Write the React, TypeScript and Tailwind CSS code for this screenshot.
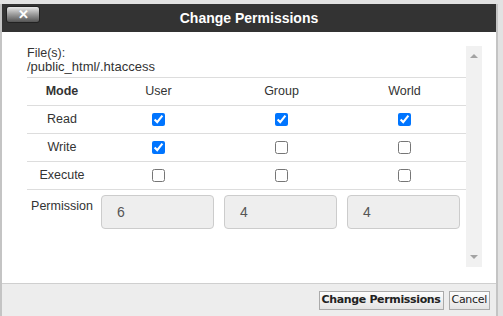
import React from 'react';

const cols = ['User', 'Group', 'World'];
const rows: { label: string; checks: boolean[] }[] = [
  { label: 'Read', checks: [true, true, true] },
  { label: 'Write', checks: [true, false, false] },
  { label: 'Execute', checks: [false, false, false] },
];
const perms = ['6', '4', '4'];

function Check({ on }: { on: boolean }) {
  return (
    <input
      type="checkbox"
      defaultChecked={on}
      className="m-0 h-[13px] w-[13px] accent-[#0075ff]"
    />
  );
}

export default function App() {
  return (
    <div className="w-[503px] h-[316px] overflow-hidden bg-[#e2e2e2] pt-[4px] font-['Liberation_Sans',Arial,sans-serif]">
      <div className="w-[498px] h-[312px] flex flex-col border-l-2 border-r-2 border-[#c4c4c4] bg-white">
        {/* title bar */}
        <div className="relative h-[28px] bg-[#333333] flex items-center justify-center">
          <button className="absolute left-[4px] top-[2px] w-[34px] h-[17px] rounded-[3px] border border-[#222] bg-gradient-to-b from-[#e8e8e8] via-[#9a9a9a] to-[#555] flex items-center justify-center">
            <span className="text-white text-[13px] font-bold leading-none">✕</span>
          </button>
          <span className="text-white text-[14px] font-bold">Change Permissions</span>
        </div>

        {/* body */}
        <div className="flex-1 flex pt-[14px] pl-[25px]">
          <div className="w-[439px] text-[#333] text-[12.5px]">
            <div className="leading-[14px]">File(s):</div>
            <div className="leading-[14px] text-[13px]">/public_html/.htaccess</div>

            <div className="mt-[3px] grid grid-cols-[70px_123px_123px_123px]">
              <div className="h-[28px] border-t border-[#ddd] flex items-center justify-center font-bold">Mode</div>
              {cols.map((c) => (
                <div key={c} className="h-[28px] border-t border-[#ddd] flex items-center justify-center">{c}</div>
              ))}
              {rows.map((r) => (
                <React.Fragment key={r.label}>
                  <div className="h-[28px] border-t border-[#ddd] flex items-center justify-center">{r.label}</div>
                  {r.checks.map((on, i) => (
                    <div key={i} className="h-[28px] border-t border-[#ddd] flex items-center justify-center">
                      <Check on={on} />
                    </div>
                  ))}
                </React.Fragment>
              ))}
              <div className="border-t border-[#ddd] pt-[7px] flex justify-center">Permission</div>
              {perms.map((p, i) => (
                <div key={i} className="border-t border-[#ddd] pt-[5px] pl-[4px] pr-[6px] flex justify-center">
                  <div className="w-[113px] h-[34px] rounded-[4px] border border-[#ccc] bg-[#eeeeee] flex items-center pl-[15px] text-[14px] text-[#555]">
                    {p}
                  </div>
                </div>
              ))}
            </div>
          </div>
          {/* scrollbar */}
          <div className="w-[16px] h-[221px] bg-[#f1f1f1] flex flex-col items-center justify-between py-[8px]">
            <div className="w-0 h-0 border-l-[4px] border-r-[4px] border-b-[4px] border-transparent border-b-[#a3a3a3]" />
            <div className="w-0 h-0 border-l-[4px] border-r-[4px] border-t-[4px] border-transparent border-t-[#a3a3a3]" />
          </div>
        </div>

        {/* footer */}
        <div className="h-[33px] border-t border-[#cfcfcf] bg-[#ededed] flex items-center justify-end gap-[5px] pr-[6px] font-['DejaVu_Sans',Verdana,sans-serif] text-[11px] text-[#222]">
          <button className="h-[19px] px-[2px] bg-gradient-to-b from-[#fdfdfd] to-[#e4e4e4] border border-[#aaa] font-bold tracking-[-0.35px]">
            Change Permissions
          </button>
          <button className="h-[19px] px-[2px] bg-gradient-to-b from-[#fdfdfd] to-[#e4e4e4] border border-[#aaa] tracking-[-0.3px]">
            Cancel
          </button>
        </div>
      </div>
    </div>
  );
}
